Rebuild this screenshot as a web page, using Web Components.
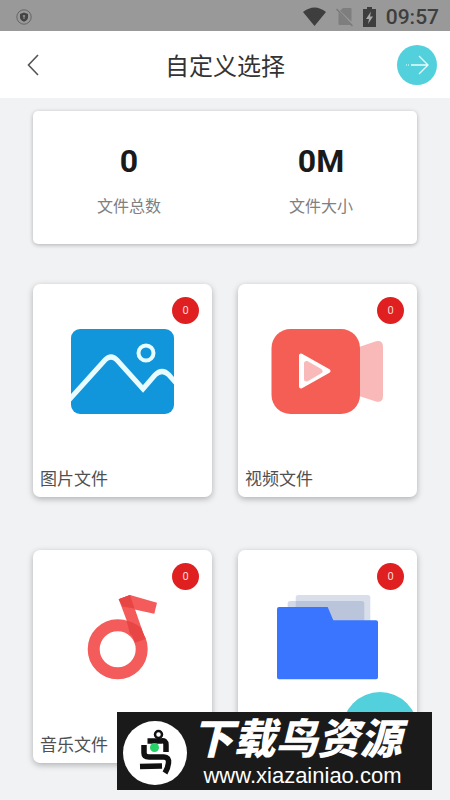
<!DOCTYPE html>
<html lang="zh-CN">
<head>
<meta charset="utf-8">
<meta name="viewport" content="width=device-width, initial-scale=1">
<title>自定义选择</title>
<style>
  html { background: #f1f2f4; }
  body { margin: 0; font-family: Roboto, "Noto Sans CJK SC", sans-serif; color: #333; }
</style>
</head>
<body>
<file-picker-page></file-picker-page>

<script>
const define = (name, html) => {
  const template = document.createElement('template');
  template.innerHTML = html;
  customElements.define(name, class extends HTMLElement {
    constructor() {
      super();
      this.attachShadow({ mode: 'open' }).append(template.content.cloneNode(true));
    }
  });
};

define('status-bar', `
  <style>
    :host { display: flex; align-items: center; justify-content: space-between; height: 31px;
      padding: 2px 11px 0 16px; background: #999; color: #3e3e3e; box-sizing: border-box; }
    svg { display: block; }
    .right { display: flex; align-items: center; gap: 10px; }
    time { font-size: 21px; line-height: 28px; font-weight: 500; }
  </style>
  <svg width="16" height="16" viewBox="0 0 16 16"><circle cx="8" cy="8" r="7.2" fill="none" stroke="#666"/><path d="M8 3.4 12 5v3.2c0 2-1.8 3.6-4 4.6-2.200-1-4-2.600-4-4.600V5z" fill="#444"/><path d="M8 6v4M6.800 7h2.400" stroke="#999" fill="none"/></svg>
  <div class="right">
    <svg width="23" height="20" viewBox="0 0 23 20"><path d="M0 5Q11.500-4 23 5L11.500 19z" fill="#3e3e3e"/></svg>
    <svg width="17" height="20" viewBox="0 0 17 20"><path d="M7 1h7.500q1 0 1 1v12.500L4 3.700zM2.500 5.500 14.500 18H3.500q-1 0-1-1z" fill="#7e7e7e"/><path d="M.5 2 16.500 19" stroke="#787878" stroke-width="1.500"/></svg>
    <svg width="13" height="20" viewBox="0 0 13 20"><path d="M4 0h5v2h4v18H0V2h4z" fill="#3e3e3e"/><path d="M8 4.500 3 12h3l-1 5 5-7.500h-3z" fill="#a8a8a8"/></svg>
    <time>09:57</time>
  </div>
`);

define('title-bar', `
  <style>
    :host { display: grid; grid-template-columns: 40px 1fr 40px; align-items: center; height: 67px;
      padding: 0 13px; background: #fff; box-sizing: border-box; }
    h1 { margin: 0; padding-top: 4px; font-size: 24px; line-height: 36px; font-weight: 400; text-align: center; color: #333; }
    button { display: grid; place-items: center; width: 40px; height: 40px; padding: 0; border: 0; background: none; }
    .next { border-radius: 50%; background: #52d1dc; }
  </style>
  <button aria-label="返回"><svg width="12" height="22" viewBox="0 0 12 22"><path d="M11 1 1.500 11 11 21" fill="none" stroke="#555" stroke-width="1.600"/></svg></button>
  <h1><slot></slot></h1>
  <button class="next" aria-label="下一步"><svg width="24" height="20" viewBox="0 0 24 20" fill="none" stroke="#e9fbfc" stroke-width="1.300"><path d="M6 10h17M14 1l9 9-9 9"/><path d="M1 10h4" stroke-dasharray="1 1" opacity=".7"/></svg></button>
`);

define('summary-stat', `
  <style>
    :host { display: block; text-align: center; }
    strong { display: block; font-size: 32px; line-height: 40px; font-weight: 700; color: #1a1a1a; }
    .label { display: block; margin-top: 14px; font-size: 16px; line-height: 24px; color: #808080; }
  </style>
  <strong><slot></slot></strong>
  <span class="label"><slot name="label"></slot></span>
`);

define('summary-card', `
  <style>
    :host { display: grid; grid-template-columns: 1fr 1fr; padding: 30px 0 25px; background: #fff;
      border-radius: 5px; box-shadow: 0 1px 4px rgba(0,0,0,.28); }
  </style>
  <slot></slot>
`);

define('count-badge', `
  <style>
    :host { display: grid; place-items: center; width: 27px; height: 27px; border-radius: 50%;
      background: #e02020; color: #ffd9d9; font-size: 11px; line-height: 14px; }
  </style>
  <slot></slot>
`);

define('file-card', `
  <style>
    :host { display: block; }
    button { position: relative; display: flex; flex-direction: column; width: 100%; height: 213px;
      padding: 45px 7px 5px; border: 0; border-radius: 7px; background: #fff; box-sizing: border-box;
      box-shadow: 0 2px 6px rgba(0,0,0,.28); font: inherit; color: #505050; text-align: left; }
    .icon { align-self: center; height: 86px; }
    .label { margin-top: auto; font-size: 17px; line-height: 26px; }
    count-badge { position: absolute; top: 13px; right: 13px; }
  </style>
  <button>
    <span class="icon"><slot name="icon"></slot></span>
    <count-badge><slot name="count"></slot></count-badge>
    <span class="label"><slot></slot></span>
  </button>
`);

define('action-bubble', `
  <style>
    :host { display: block; position: fixed; right: 32px; bottom: 32px; }
    button { display: block; width: 76px; height: 76px; border: 0; border-radius: 50%; background: #52d1dc; }
  </style>
  <button aria-label="下一步"></button>
`);

define('site-banner', `
  <style>
    :host { position: fixed; right: 18px; bottom: 10px; display: flex; align-items: center;
      width: 315px; padding: 6px 14px 2px 6px; background: #1a1a1a; color: #fff; box-sizing: border-box; }
    svg { flex: none; }
    .text { flex: 1; text-align: center; white-space: nowrap; }
    b { display: block; padding-right: 12px; font: italic 900 42px/44px "Liberation Sans", "Noto Sans CJK SC", sans-serif; }
    a { display: block; margin-top: 2px; color: #fff; text-decoration: none; font: 22px/24px "Liberation Sans", sans-serif; }
  </style>
  <svg width="64" height="64" viewBox="0 0 64 64"><circle cx="32" cy="32" r="32" fill="#fff"/>
    <g fill="none" stroke="#111" stroke-width="5.500"><circle cx="35.500" cy="13.500" r="3.500" stroke-width="2.500"/><path d="M24.500 20H38Q43 19 43 24V31"/><path d="M21 24V32Q21 36 26 36H41Q46 36 45.500 42 45 47 42 52"/><path d="M17 45.500 39 45"/></g><circle cx="31.500" cy="26.500" r="4.500" fill="#25d366"/></svg>
  <div class="text"><b>下载鸟资源</b><a href="#">www.xiazainiao.com</a></div>
`);

define('file-picker-page', `
  <style>
    :host { display: block; }
    main { padding: 13px 33px 37px; }
    .grid { display: grid; grid-template-columns: 1fr 1fr; gap: 53px 26px; margin-top: 40px; }
    svg { display: block; }
  </style>
  <status-bar></status-bar>
  <title-bar>自定义选择</title-bar>
  <main>
    <summary-card>
      <summary-stat>0<span slot="label">文件总数</span></summary-stat>
      <summary-stat>0M<span slot="label">文件大小</span></summary-stat>
    </summary-card>
    <div class="grid">
      <file-card>
        <svg slot="icon" width="119" height="86" viewBox="0 0 119 86"><defs><clipPath id="frame"><rect x="8" width="103" height="85" rx="9"/></clipPath></defs><g clip-path="url(#frame)"><rect x="8" width="103" height="85" fill="#1296db"/><path d="M6 71 42 31Q48 25 54 31L80 60 92 46Q99 39 106 46L113 54" fill="none" stroke="#e8fbff" stroke-width="5"/></g><circle cx="83" cy="24" r="7.500" fill="none" stroke="#e8fbff" stroke-width="4"/></svg>
        <span slot="count">0</span>图片文件
      </file-card>
      <file-card>
        <svg slot="icon" width="119" height="86" viewBox="0 0 119 86"><path d="M91 18 108 12.300Q115 11 115 18V67Q115 74 108 72.500L91 67z" fill="#f9b9b9"/><rect x="3.500" width="88.500" height="85" rx="19" fill="#f55e55"/><path d="M33 26.500V57.500L60.500 42z" fill="#fff" stroke="#fff" stroke-width="4" stroke-linejoin="round"/><path d="M38.500 34.500V50L52 42.200z" fill="#f9b9b9" stroke="#f9b9b9" stroke-width="5" stroke-linejoin="round"/></svg>
        <span slot="count">0</span>视频文件
      </file-card>
      <file-card>
        <svg slot="icon" width="119" height="86" viewBox="0 0 119 86"><circle cx="54.700" cy="54.300" r="24" fill="none" stroke="#f45b5b" stroke-width="12"/><path d="M55.700 4.300 67 0 94 7.700 91.300 18.700 60 12z" fill="#f45b5b"/><path d="M55.700 4.300 67 0 82.300 44 72 47.700z" fill="#f45b5b"/><path d="M55.700 4.300 67 0 71.500 13.500 59.500 11.500zM63.500 25.500Q72 27.500 78.300 33L82.300 44 72 47.700 69.500 41 67 39z" fill="#e84545"/></svg>
        <span slot="count">0</span>音乐文件
      </file-card>
      <file-card>
        <svg slot="icon" width="119" height="86" viewBox="0 0 119 86"><rect x="27.700" width="74.600" height="40" rx="2.500" fill="#d8deea"/><rect x="19.700" y="6" width="76.600" height="40" rx="2.500" fill="#8fa0c8" opacity=".4"/><path d="M11 12H59.700L65.300 25.300H108Q110 25.300 110 27.300V82.300Q110 84.300 108 84.300H11Q9 84.300 9 82.300V14Q9 12 11 12z" fill="#3a75ff"/></svg>
        <span slot="count">0</span>
      </file-card>
    </div>
  </main>
  <action-bubble></action-bubble>
  <site-banner></site-banner>
`);
</script>
</body>
</html>
